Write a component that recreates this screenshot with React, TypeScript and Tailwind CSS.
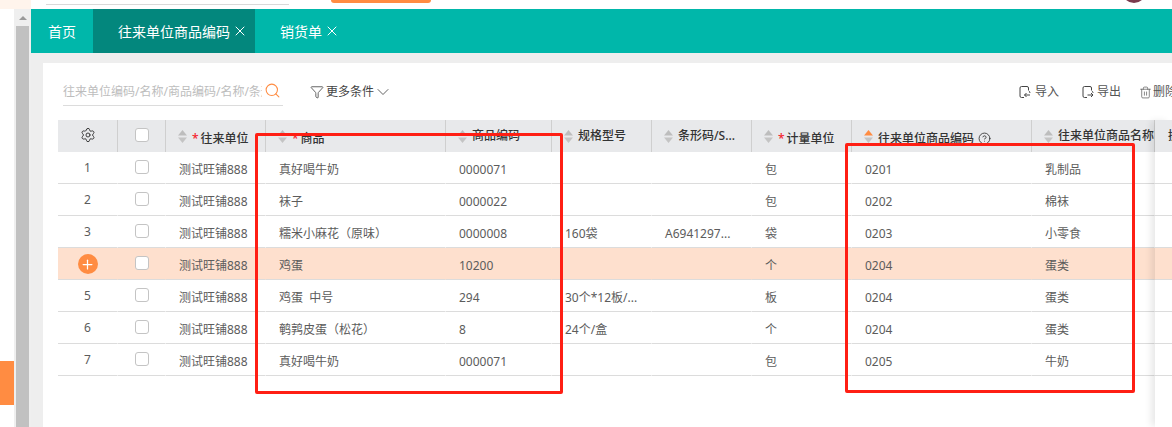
import { ChevronDown, CircleHelp, Filter, Plus, Search, Settings, Trash2, X } from "lucide-react";

const font = "[font-family:'Noto_Sans','Noto_Sans_CJK_SC',sans-serif]";

type Col = { w: string; title: string; req?: boolean; low?: boolean; active?: boolean; help?: boolean };

const cols: Col[] = [
  { w: "w-[100px]", title: "往来单位", req: true, low: true },
  { w: "w-[180px]", title: "商品", req: true, low: true },
  { w: "w-[106px]", title: "商品编码" },
  { w: "w-[100px]", title: "规格型号" },
  { w: "w-[100px]", title: "条形码/S..." },
  { w: "w-[100px]", title: "计量单位", req: true, low: true },
  { w: "w-[180px]", title: "往来单位商品编码", low: true, active: true, help: true },
  { w: "w-[123px]", title: "往来单位商品名称" },
];

const rows = [
  ["1", "测试旺铺888", "真好喝牛奶", "0000071", "", "", "包", "0201", "乳制品"],
  ["2", "测试旺铺888", "袜子", "0000022", "", "", "包", "0202", "棉袜"],
  ["3", "测试旺铺888", "糯米小麻花（原味）", "0000008", "160袋", "A6941297...", "袋", "0203", "小零食"],
  ["4", "测试旺铺888", "鸡蛋", "10200", "", "", "个", "0204", "蛋类"],
  ["5", "测试旺铺888", "鸡蛋  中号", "294", "30个*12板/...", "", "板", "0204", "蛋类"],
  ["6", "测试旺铺888", "鹌鹑皮蛋（松花）", "8", "24个/盒", "", "个", "0204", "蛋类"],
  ["7", "测试旺铺888", "真好喝牛奶", "0000071", "", "", "包", "0205", "牛奶"],
];

function SortIcon({ active }: { active?: boolean }) {
  return (
    <svg width="9" height="13" viewBox="0 0 9 13" className="shrink-0">
      <path d="M4.5 0 9 5.5H0Z" fill={active ? "#ff8c42" : "#bdbdbd"} />
      <path d="M4.5 13 0 7.5h9Z" fill="#c4c4c4" />
    </svg>
  );
}

function FileArrow({ out }: { out?: boolean }) {
  return (
    <svg width="12" height="14" viewBox="0 0 12 14" fill="none" stroke="#444" strokeWidth="1" className="block shrink-0">
      <path d="M9.5 5V3A1.5 1.5 0 0 0 8 1.5H2.5A1.5 1.5 0 0 0 1 3v8a1.5 1.5 0 0 0 1.5 1.5h2.5" />
      <path d="M9.5 5.5c1 .8 1.5 1.6 1.5 2.5" />
      {out ? <path d="M5.5 10h5.5M9 8l2 2-2 2" /> : <path d="M11 10H5.5M7.5 8l-2 2 2 2" />}
    </svg>
  );
}

function Check() {
  return <span className="block h-[14px] w-[14px] rounded-[3px] border border-[#c4c4c4] bg-white" />;
}

export default function App() {
  return (
    <div className={`relative flex h-[427px] w-[1172px] overflow-hidden bg-white text-[12px] text-[#5c5c5c] ${font}`}>
      {/* page edge */}
      <div className="flex w-[14px] shrink-0 flex-col">
        <div className="h-[9px] bg-[#fff4ec]" />
        <div className="h-[352px]" />
        <div className="h-[44px] bg-[#ff8c42]" />
      </div>

      {/* scrollbar */}
      <div className="flex w-[17px] shrink-0 flex-col">
        <div className="h-[9px] bg-[#fff4ec]" />
        <div className="flex flex-1 flex-col items-start bg-[#efefef] pl-[2px]">
          <div className="flex h-[17px] w-[13px] items-center justify-center">
            <span className="h-0 w-0 border-x-[4px] border-b-[4px] border-x-transparent border-b-[#9a9a9a]" />
          </div>
          <div className="w-[13px] flex-1 bg-[#c1c1c1]" />
        </div>
      </div>

      <div className="flex min-w-0 flex-1 flex-col">
        {/* top strip */}
        <div className="flex h-[9px] shrink-0 items-start overflow-hidden bg-white">
          <div className="ml-[15px] mt-[4px] h-px w-[243px] bg-[#d9d9d9]" />
          <div className="ml-[42px] h-[3px] w-[100px] rounded-b-[3px] bg-[#ff8c42]" />
          <div className="ml-[691px] -mt-[21px] h-[24px] w-[24px] rounded-full bg-[#7a3b4e]" />
        </div>

        {/* tabs */}
        <div className="flex h-[44px] shrink-0 items-center bg-[#00b7aa] text-[14px] text-white">
          <div className="flex h-full w-[62px] items-center pl-[17px]">首页</div>
          <div className="flex h-full w-[162px] items-center bg-[#03877d] pl-[25px]">
            <span>往来单位商品编码</span>
            <X size={16} strokeWidth={1.5} className="ml-[2px]" />
          </div>
          <div className="flex h-full items-center pl-[25px]">
            <span>销货单</span>
            <X size={16} strokeWidth={1.5} className="ml-[2px]" />
          </div>
        </div>

        {/* content */}
        <div className="flex min-h-0 flex-1 flex-col bg-[#eeeeee] pl-[12px] pt-[10px]">
          <div className="flex min-h-0 flex-1 flex-col bg-white">
            {/* toolbar */}
            <div className="flex h-[57px] shrink-0 items-start pl-[20px] pt-[13px]">
              <div className="flex h-[30px] w-[220px] shrink-0 items-center border-b border-[#dcdcdc] pt-[2px]">
                <input
                  readOnly
                  placeholder="往来单位编码/名称/商品编码/名称/条形码"
                  className="w-[199px] bg-transparent text-[12px] outline-none placeholder:text-[#bdbdbd]"
                />
                <Search size={17} strokeWidth={1.5} className="-mt-[3px] ml-[2px] text-[#ff8c42]" />
              </div>
              <div className="ml-[27px] flex h-[30px] shrink-0 items-center whitespace-nowrap pt-[2px] text-[#444]">
                <Filter size={14} strokeWidth={1.4} />
                <span className="ml-[2px]">更多条件</span>
                <ChevronDown size={20} strokeWidth={1} className="-ml-px" />
              </div>
              <div className="ml-[626px] flex h-[30px] shrink-0 items-center whitespace-nowrap pt-[2px] text-[#555]">
                <FileArrow />
                <span className="ml-[4px]">导入</span>
                <span className="ml-[23px]">
                  <FileArrow out />
                </span>
                <span className="ml-[3px]">导出</span>
                <Trash2 size={13} strokeWidth={1.3} className="ml-[18px]" />
                <span className="ml-px">删除</span>
              </div>
            </div>

            {/* table */}
            <div className="flex min-h-0 flex-1 pl-[15px]">
              <div className="flex flex-col">
                <div className="flex h-[32px] bg-[#e8e9eb] font-medium text-[#333]">
                  <div className="flex w-[60px] items-center justify-center border-r border-[#cfcfcf]">
                    <Settings size={16} strokeWidth={1.4} className="-mt-[2px]" />
                  </div>
                  <div className="flex w-[48px] items-center justify-center border-r border-[#cfcfcf]">
                    <span className="-mt-[2px]">
                      <Check />
                    </span>
                  </div>
                  {cols.map((c) => (
                    <div key={c.title} className={`flex items-center whitespace-nowrap border-r border-[#cfcfcf] pl-[12px] ${c.w}`}>
                      <SortIcon active={c.active} />
                      {c.low ? (
                        <span className="ml-[5px] flex items-center pt-[5px]">
                          {c.req ? <span className="mr-[2px] text-[#f5222d]">*</span> : null}
                          <span>{c.title}</span>
                          {c.help ? <CircleHelp size={13} strokeWidth={1.6} className="ml-[4px]" /> : null}
                        </span>
                      ) : (
                        <span className="ml-[5px]">{c.title}</span>
                      )}
                    </div>
                  ))}
                </div>

                {rows.map((r) => {
                  const peach = r[0] === "4";
                  return (
                    <div key={r[0]} className={`flex h-[32px] ${peach ? "bg-[#fee0ce]" : ""}`}>
                      <div className="flex w-[60px] items-center justify-center border-b border-r border-[#dcdcdc] border-r-transparent pt-[1px]">
                        {peach ? (
                          <span className="flex h-[20px] w-[20px] items-center justify-center rounded-full bg-[#ff8c42] text-white">
                            <Plus size={15} strokeWidth={2} />
                          </span>
                        ) : (
                          r[0]
                        )}
                      </div>
                      <div className="flex w-[48px] items-center justify-center border-b border-r border-[#dcdcdc] border-r-transparent">
                        <span className="-mt-[2px]">
                          <Check />
                        </span>
                      </div>
                      {r.slice(1).map((v, i) => (
                        <div
                          key={i}
                          className={`flex items-center whitespace-pre border-b border-r border-[#dcdcdc] border-r-transparent pl-[13px] pt-[4px] ${cols[i].w}`}
                        >
                          {v}
                        </div>
                      ))}
                    </div>
                  );
                })}
              </div>

              {/* fixed column */}
              <div className="relative z-10 flex min-w-0 flex-1 flex-col bg-white shadow-[-5px_0_7px_-1px_rgba(0,0,0,0.09)]">
                <div className="flex h-[32px] items-center overflow-hidden whitespace-nowrap bg-[#e8e9eb] pl-[13px] font-medium text-[#333]">操作</div>
                {rows.map((r) => (
                  <div key={r[0]} className={`h-[32px] border-b border-[#dcdcdc] ${r[0] === "4" ? "bg-[#fee0ce]" : ""}`} />
                ))}
              </div>
            </div>
          </div>
        </div>
      </div>

      {/* red annotation boxes */}
      <div className="absolute left-[255px] top-[133px] z-20 h-[261px] w-[308px] rounded-[2px] border-[3px] border-[#ff1f14]" />
      <div className="absolute left-[845px] top-[143px] z-20 h-[250px] w-[290px] rounded-[2px] border-[3px] border-[#ff1f14]" />
    </div>
  );
}
